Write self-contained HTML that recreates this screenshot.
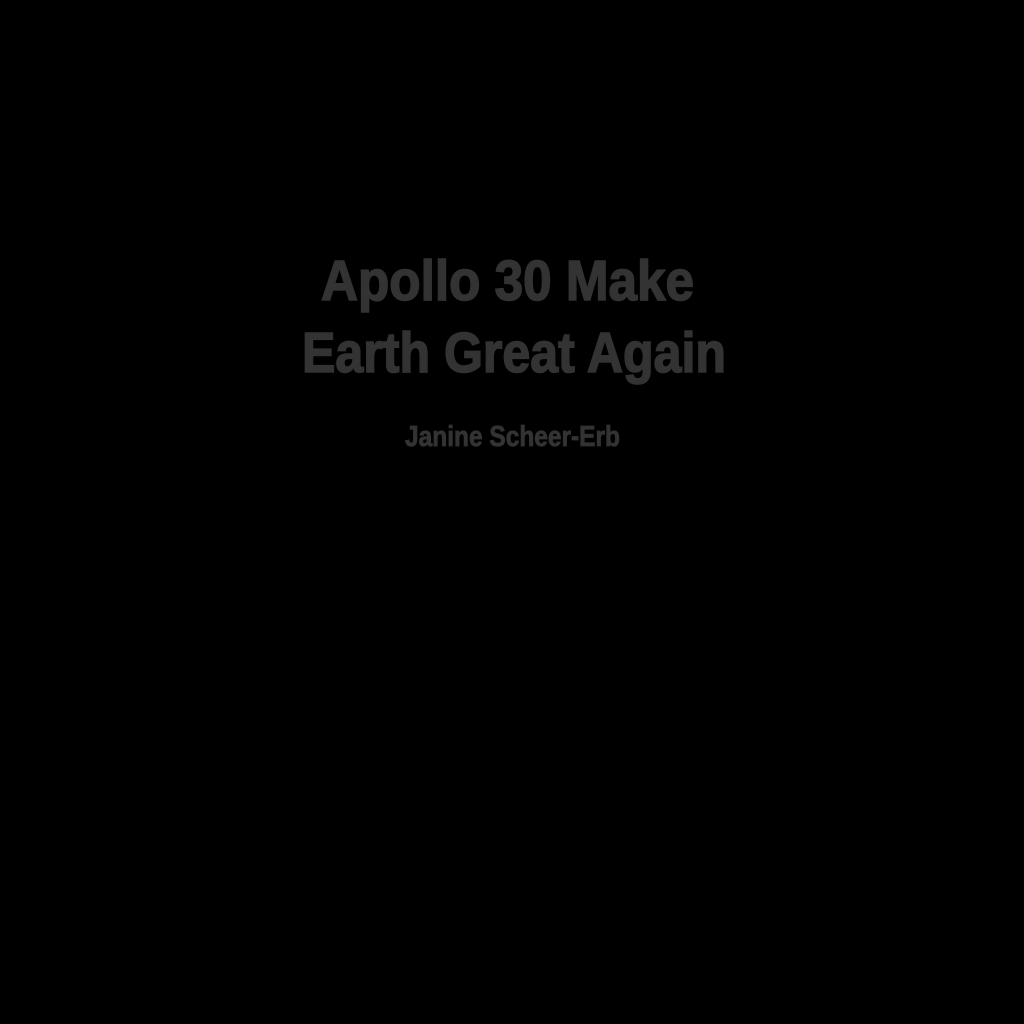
<!DOCTYPE html>
<html><head><meta charset="utf-8"><style>html,body{margin:0;background:#000;width:1024px;height:1024px;overflow:hidden}</style></head>
<body>
<svg width="1024" height="1024" xmlns="http://www.w3.org/2000/svg" style="display:block">
<rect width="1024" height="1024" fill="#000"/>
<g fill="#333" stroke="#333" font-family="Liberation Sans, sans-serif" font-weight="bold">
<text x="321" y="300" font-size="57" stroke-width="1.6" textLength="373" lengthAdjust="spacingAndGlyphs">Apollo 30 Make</text>
<text x="302" y="372" font-size="57" stroke-width="1.6" textLength="424" lengthAdjust="spacingAndGlyphs">Earth Great Again</text>
<text x="405" y="446" font-size="29" stroke-width="0.8" textLength="215" lengthAdjust="spacingAndGlyphs">Janine Scheer-Erb</text>
</g>
</svg>
</body></html>
